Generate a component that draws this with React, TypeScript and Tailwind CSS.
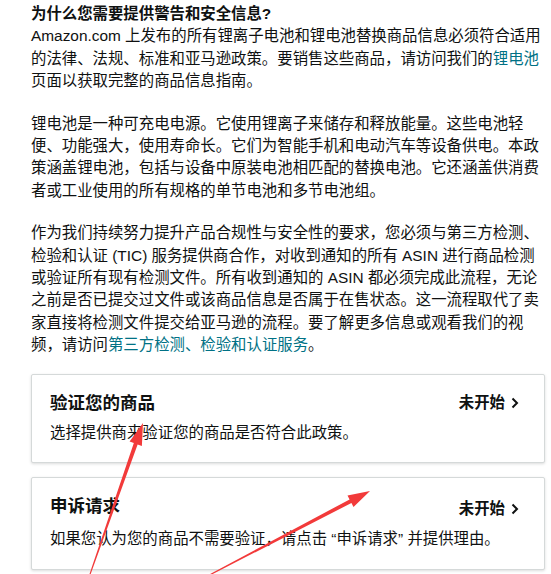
import React from 'react'

const font = { fontFamily: '"Liberation Sans", Arial, "Noto Sans CJK SC", sans-serif' }

// red annotation arrow, tapering from tail to head
function arrowPoints(tx: number, ty: number, hx: number, hy: number) {
  const dx = hx - tx
  const dy = hy - ty
  const len = Math.sqrt(dx * dx + dy * dy)
  const ux = dx / len
  const uy = dy / len
  const px = -uy
  const py = ux
  const headLen = 22
  const headW = 6.5
  const shaftW = 2
  const tailW = 0.5
  const bx = hx - ux * headLen
  const by = hy - uy * headLen
  const pts = [
    [tx + px * tailW, ty + py * tailW],
    [bx + px * shaftW, by + py * shaftW],
    [bx + px * headW, by + py * headW],
    [hx, hy],
    [bx - px * headW, by - py * headW],
    [bx - px * shaftW, by - py * shaftW],
    [tx - px * tailW, ty - py * tailW],
  ]
  return pts.map((p) => p.join(',')).join(' ')
}

function Chevron() {
  return (
    <svg width="8" height="12" viewBox="0 0 8 12" className="ml-[6px]">
      <polyline points="1.5,1.5 6,6 1.5,10.5" fill="none" stroke="#0f1111" strokeWidth="2" />
    </svg>
  )
}

function StepCard({ title, desc, statusOffset = '' }: { title: string; desc: string; statusOffset?: string }) {
  return (
    <div className="border border-[#d5d9d9] rounded-[2px] bg-white shadow-[0_1px_3px_rgba(15,17,17,0.15)] pl-[18px] pr-[25px] pt-4 pb-[18px]">
      <div className="flex items-start justify-between">
        <h3 className="text-[17.5px] leading-6 font-bold text-[#0f1111]">{title}</h3>
        <div className={`flex items-center text-[15.4px] leading-6 font-bold text-[#0f1111] ${statusOffset}`}>
          未开始
          <Chevron />
        </div>
      </div>
      <p className="mt-[7px] text-[15.4px] leading-[22.4px] text-[#0f1111]">{desc}</p>
    </div>
  )
}

export default function App() {
  return (
    <div className="relative w-[551px] h-[574px] overflow-hidden bg-white" style={font}>
      <div className="pl-[31px] pr-[6px] pt-[3px] text-[15.4px] leading-[22.4px] text-[#0f1111]">
        <h2 className="font-bold">为什么您需要提供警告和安全信息?</h2>
        <p>
          Amazon.com 上发布的所有锂离子电池和锂电池替换商品信息必须符合适用的法律、法规、标准和亚马逊政策。要销售这些商品，请访问我们的
          <a className="text-[#007185]">锂电池</a>
          页面以获取完整的商品信息指南。
        </p>
        <p className="mt-5">
          锂电池是一种可充电电源。它使用锂离子来储存和释放能量。这些电池轻便、功能强大，使用寿命长。它们为智能手机和电动汽车等设备供电。本政策涵盖锂电池，包括与设备中原装电池相匹配的替换电池。它还涵盖供消费者或工业使用的所有规格的单节电池和多节电池组。
        </p>
        <p className="mt-5">
          作为我们持续努力提升产品合规性与安全性的要求，您必须与第三方检测、检验和认证 (TIC) 服务提供商合作，对收到通知的所有 ASIN 进行商品检测或验证所有现有检测文件。所有收到通知的 ASIN 都必须完成此流程，无论之前是否已提交过文件或该商品信息是否属于在售状态。这一流程取代了卖家直接将检测文件提交给亚马逊的流程。要了解更多信息或观看我们的视频，请访问
          <a className="text-[#007185]">第三方检测、检验和认证服务</a>。
        </p>

        <div className="mt-[17px] flex flex-col gap-[14px]">
          <StepCard title="验证您的商品" desc="选择提供商来验证您的商品是否符合此政策。" />
          <StepCard
            title="申诉请求"
            desc={'如果您认为您的商品不需要验证，请点击 “申诉请求” 并提供理由。'}
            statusOffset="mt-[3px]"
          />
        </div>
      </div>

      <svg className="absolute left-0 top-0 pointer-events-none" width="551" height="574">
        <polygon points={arrowPoints(88, 580, 143, 423)} fill="#f23a3a" />
        <polygon points={arrowPoints(200, 580, 370, 491)} fill="#f23a3a" />
      </svg>
    </div>
  )
}
